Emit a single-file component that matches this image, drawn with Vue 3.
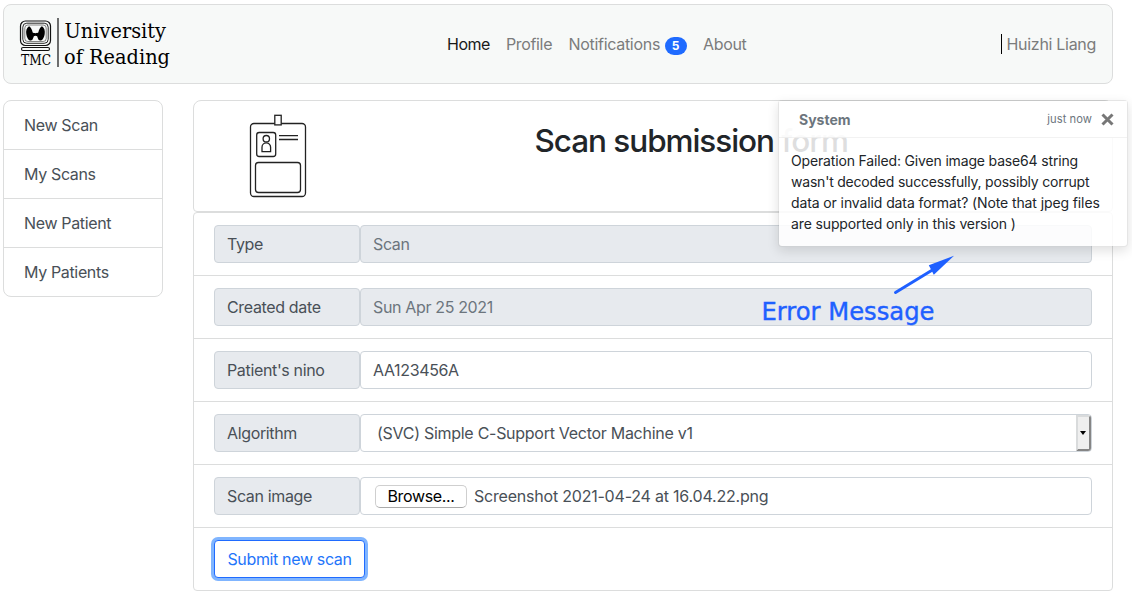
<script setup>
const menu = ['New Scan', 'My Scans', 'New Patient', 'My Patients']
const rows = [
  { label: 'Type', value: 'Scan', kind: 'disabled' },
  { label: 'Created date', value: 'Sun Apr 25 2021', kind: 'disabled' },
  { label: "Patient's nino", value: 'AA123456A', kind: 'text' },
  { label: 'Algorithm', value: '(SVC) Simple C-Support Vector Machine v1', kind: 'select' },
  { label: 'Scan image', value: 'Screenshot 2021-04-24 at 16.04.22.png', kind: 'file' },
]
</script>

<template>
  <div class="page">
    <nav class="navbar">
      <svg class="logo" width="156" height="56" viewBox="0 0 156 56">
        <g fill="none" stroke="#111">
          <rect x="2.5" y="5" width="30" height="24.500" rx="5" stroke-width="1.2" />
          <rect x="4.800" y="7.200" width="25.400" height="20.100" rx="4" stroke-width=".9" />
          <rect x="6.800" y="9" width="21.400" height="16.500" rx="3" stroke-width=".5" />
          <rect x="3.5" y="31.500" width="28" height="3" rx="1.5" stroke-width="1.1" />
        </g>
        <path d="M11 10.200C8.500 11.800 7.800 15 8.300 18C8.800 21.500 10.500 24.800 12.800 24.600C15 24.400 15.200 21.500 15.900 20.300C16.500 19.600 18.500 19.600 19.100 20.300C19.800 21.500 20 24.400 22.200 24.600C24.500 24.800 26.200 21.500 26.700 18C27.200 15 26.500 11.800 24 10.200C22.400 11 21 13.300 20.300 16.600C19.600 17.400 15.400 17.400 14.700 16.600C14 13.300 12.600 11 11 10.200Z" fill="#000" />
        <text x="3" y="49" class="tmc" textLength="30" lengthAdjust="spacingAndGlyphs">TMC</text>
        <path d="M40 2v49" stroke="#222" stroke-width="1.300" />
        <text x="46.500" y="21.500" class="brand" textLength="101.500" lengthAdjust="spacingAndGlyphs">University</text>
        <text x="46" y="47.500" class="brand" textLength="106" lengthAdjust="spacingAndGlyphs">of Reading</text>
      </svg>
      <div class="links">
        <a class="active home">Home</a>
        <a class="profile">Profile</a>
        <a class="notifications"><span>Notifications</span><b class="badge">5</b></a>
        <a class="about">About</a>
      </div>
      <div class="user">Huizhi Liang</div>
    </nav>

    <div class="columns">
      <ul class="menu">
        <li v-for="m in menu" :key="m">{{ m }}</li>
      </ul>

      <main class="main">
        <header class="title-card">
          <svg class="id-icon" width="60" height="86" viewBox="0 0 60 86" fill="none" stroke="#222" stroke-width="1.300">
            <rect x="2.500" y="10.500" width="55" height="73" rx="3.500" />
            <rect x="26.800" y="2.300" width="6.400" height="9.600" fill="#fff" />
            <rect x="8.700" y="19.500" width="19" height="24" rx="2.500" />
            <circle cx="18.300" cy="25.700" r="3.200" />
            <path d="M14 38.700v-4.500a4.300 4.300 0 0 1 8.600 0v4.500Z" />
            <path d="M31 22.600h19M31 26.500h19" />
            <rect x="7.500" y="49.500" width="45" height="30" rx="3" />
          </svg>
          <h1>Scan submission form</h1>
        </header>
        <section class="form">
          <div v-for="r in rows" :key="r.label" class="row">
            <div class="label">{{ r.label }}</div>
            <div class="control" :class="r.kind">
              <span v-if="r.kind === 'file'" class="browse">Browse...</span>
              <span class="value">{{ r.value }}</span>
              <span v-if="r.kind === 'select'" class="drop"><i></i></span>
            </div>
          </div>
          <div class="row"><button class="submit">Submit new scan</button></div>
        </section>
      </main>
    </div>

    <div class="toast">
      <div class="toast-head">
        <strong>System</strong>
        <small>just now</small>
        <svg width="14" height="14" viewBox="0 0 14 14"><path d="M1.500 1.500l10 10M11.500 1.500L1.500 11.500" stroke="#777" stroke-width="3" /></svg>
      </div>
      <div class="toast-body">
        <div class="l1">Operation Failed: Given image base64 string</div>
        <div class="l2">wasn't decoded successfully, possibly corrupt</div>
        <div class="l3">data or invalid data format? (Note that jpeg files</div>
        <div class="l4">are supported only in this version )</div>
      </div>
    </div>

    <svg class="note" width="200" height="80" viewBox="0 0 200 80">
      <path d="M135.500 41.500L174 18" stroke="#1f60ff" stroke-width="3" stroke-linecap="round" />
      <path d="M194 4.800L168.800 14.200L173.800 23.800Z" fill="#1f60ff" />
      <text x="1.500" y="69" textLength="173" lengthAdjust="spacingAndGlyphs">Error Message</text>
    </svg>
  </div>
</template>

<style>
body { background: #fff; }
</style>

<style scoped>
* { box-sizing: border-box; }
.page {
  position: relative;
  width: 1132px;
  height: 601px;
  padding: 4px 19px 0 3px;
  overflow: hidden;
  font-family: Inter, "Liberation Sans", sans-serif;
  font-size: 16px;
  line-height: 24px;
  letter-spacing: -0.35px;
  color: #212529;
}
.navbar {
  position: relative;
  display: flex;
  align-items: center;
  justify-content: space-between;
  height: 80px;
  padding: 0 16px 0 14px;
  border: 1px solid #dcdddd;
  border-radius: 8px;
  background: #f7f9f8;
}
.logo { display: block; overflow: visible; }
.tmc { font: 14.500px "DejaVu Serif", serif; letter-spacing: 0; }
.brand { font: 21px "DejaVu Serif", serif; letter-spacing: 0; }
.links {
  position: absolute;
  left: 443px;
  top: 27px;
  display: flex;
  gap: 16px;
  color: #7b7c7c;
}
.links a { white-space: nowrap; }
.links .home { width: 43px; letter-spacing: -0.5px; }
.links .profile { width: 46.500px; }
.links .notifications { display: flex; width: 118.500px; }
.links .notifications span { width: 96px; letter-spacing: -0.3px; }
.links .active { color: #191a1a; }
.badge {
  width: 22px;
  height: 18px;
  margin-top: 5px;
  border-radius: 9px;
  background: #1f6bff;
  color: #fff;
  font-size: 12px;
  line-height: 18px;
  text-align: center;
}
.user {
  height: 20px;
  padding-left: 5px;
  border-left: 1px solid #000;
  line-height: 20px;
  letter-spacing: -0.3px;
  color: #7b7c7c;
}
.columns { display: flex; gap: 30px; margin-top: 16px; }
.menu {
  width: 160px;
  height: 197px;
  margin: 0;
  padding: 0;
  border: 1px solid #dcdddd;
  border-radius: 8px;
  list-style: none;
  color: #495057;
}
.menu li { height: 49px; padding: 12px 20px; }
.menu li:first-child { height: 48px; }
.menu li + li { border-top: 1px solid #dcdddd; }
.main { width: 920px; }
.title-card {
  display: flex;
  height: 112px;
  padding: 12px 0 0 54px;
  border: 1px solid #dcdddd;
  border-radius: 8px 8px 4px 4px;
}
h1 {
  margin: 9px 0 0 226.500px;
  font-size: 31.500px;
  line-height: 38px;
  font-weight: 500;
  letter-spacing: -1.050px;
  white-space: nowrap;
}
.form { border: 1px solid #dcdddd; border-radius: 4px; height: 379px; }
.row { display: flex; height: 63px; padding: 12px 20px; }
.row:first-child { height: 62px; }
.row + .row { border-top: 1px solid #dcdddd; }
.label, .control {
  height: 38px;
  padding: 6px 12px;
  border: 1px solid #ced4da;
  border-radius: 4px;
  color: #495057;
  white-space: nowrap;
}
.label { width: 146px; background: #e7eaee; }
.control { position: relative; display: flex; flex: 1; }
.disabled { background: #e7eaee; color: #6c757d; }
.select { padding-left: 16px; letter-spacing: -0.280px; }
.file { padding-left: 14px; }
.file .value { letter-spacing: -0.210px; }
.browse {
  width: 92px;
  height: 23px;
  margin: 1px 7px 0 0;
  border: 1px solid #cfcfcf;
  border-bottom-color: #aaa;
  border-radius: 5px;
  line-height: 21px;
  text-align: center;
  color: #000;
}
.drop {
  position: absolute;
  right: 0;
  top: 0;
  width: 15px;
  height: 36px;
  border: 2px solid #d9dbdc;
  border-right-color: #858585;
  border-bottom-color: #858585;
  border-radius: 0 3px 3px 0;
  background: #efefef;
}
.drop i {
  display: block;
  width: 0;
  margin: 14px 0 0 2px;
  border: 3.500px solid transparent;
  border-top: 4px solid #000;
  border-bottom: 0;
}
.submit {
  width: 151px;
  height: 38px;
  padding: 0;
  border: 1px solid #1f6bff;
  border-radius: 4px;
  background: #fff;
  box-shadow: 0 0 0 3px #80b5ff;
  color: #1f75fa;
  font: inherit;
  letter-spacing: inherit;
}
.toast {
  position: absolute;
  left: 778px;
  top: 100px;
  width: 350px;
  height: 147px;
  border: 1px solid rgba(0, 0, 0, .1);
  border-radius: 4px;
  background: rgba(255, 255, 255, .85);
  background-clip: padding-box;
  box-shadow: 0 4px 12px rgba(0, 0, 0, .12);
  font-size: 14px;
  line-height: 21px;
  letter-spacing: 0;
}
.toast-head {
  display: flex;
  align-items: center;
  height: 37px;
  padding: 1px 12px 0 20px;
  border-bottom: 1px solid rgba(0, 0, 0, .05);
  background: rgba(255, 255, 255, .85);
  color: #6c757d;
}
.toast-head strong { margin-right: auto; font-weight: 700; }
.toast-head small { margin-right: 9px; font-size: 11.200px; letter-spacing: .05px; }
.toast-body { padding: 12px; white-space: nowrap; }
.l1 { letter-spacing: -0.160px; }
.l2 { letter-spacing: -0.210px; }
.l3 { letter-spacing: -0.110px; }
.l4 { letter-spacing: -0.130px; }
.note { position: absolute; left: 760px; top: 251px; }
.note text {
  fill: #1f60ff;
  stroke: #1f60ff;
  stroke-width: .4px;
  font: 24px "DejaVu Sans", sans-serif;
  letter-spacing: 0;
}
</style>
